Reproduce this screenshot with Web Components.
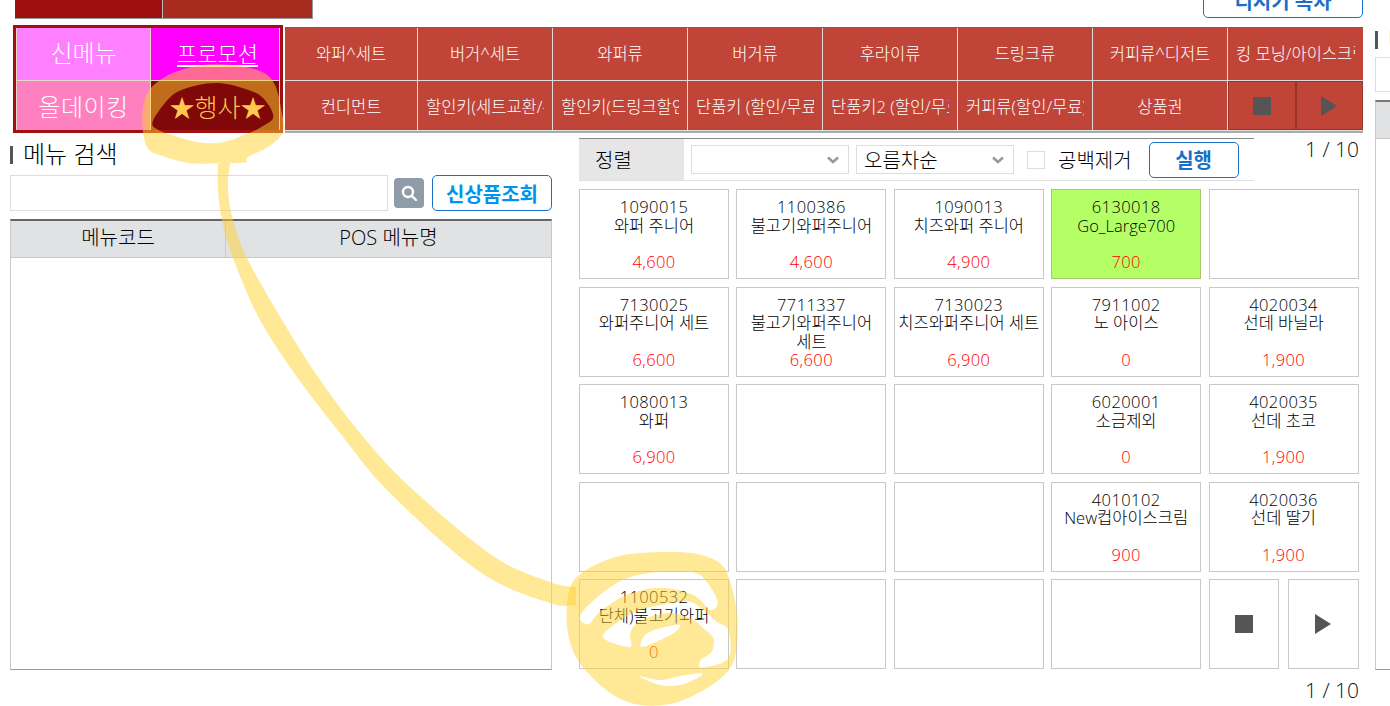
<!DOCTYPE html>
<html lang="ko">
<head>
<meta charset="utf-8">
<title>POS 메뉴</title>
<style>
  html, body { margin: 0; padding: 0; background: #fff; }
  body {
    width: 1390px; height: 706px; overflow: hidden; position: relative;
    font-family: "Open Sans", "Noto Sans CJK KR", sans-serif; font-weight: 300; color: #000;
  }
</style>
</head>
<body>
<pos-page></pos-page>
<marker-overlay></marker-overlay>

<script>
const stopIcon = (c = '#555') => `<svg width="18" height="18" viewBox="0 0 18 18"><rect width="18" height="18" fill="${c}"/></svg>`;
const playIcon = (c = '#555') => `<svg width="16" height="20" viewBox="0 0 16 20"><path d="M0 0L16 10L0 20Z" fill="${c}"/></svg>`;

class KeyCell extends HTMLElement {
  connectedCallback() {
    this.attachShadow({ mode: 'open' }).innerHTML = `
      <style>
        :host {
          display: flex; align-items: center; justify-content: center; min-width: 0;
          background: #c04538; color: #fff; font-size: 16.5px; overflow: hidden;
          box-sizing: border-box; padding: 0 8px;
        }
        span { display: block; white-space: nowrap; overflow: hidden; text-align: center; width: 100%; }
      </style>
      <span><slot></slot></span>`;
  }
}
customElements.define('key-cell', KeyCell);

class KeyGrid extends HTMLElement {
  connectedCallback() {
    const rows = [
      ['와퍼^세트', '버거^세트', '와퍼류', '버거류', '후라이류', '드링크류', '커피류^디저트', '킹 모닝/아이스크림'],
      ['컨디먼트', '할인키(세트교환/무료)', '할인키(드링크할인)', '단품키 (할인/무료)', '단품키2 (할인/무료)', '커피류(할인/무료)', '상품권'],
    ];
    const cells = rows.flat().map((t) => `<key-cell>${t}</key-cell>`).join('');
    this.attachShadow({ mode: 'open' }).innerHTML = `
      <style>
        :host {
          display: grid; box-sizing: border-box; width: 1078px; height: 106px; margin-top: 2px;
          grid-template-columns: 132px repeat(6, 134px) 135px; grid-template-rows: 52px 49px;
          column-gap: 1px; row-gap: 1px; background: #ddd;
          border-top: 1px solid #666; border-bottom: 2px solid #aaa;
        }
        key-cell:nth-of-type(-n+8) { padding-bottom: 3px; }
        .ctl { display: flex; background: #9c3226; gap: 2px; padding: 1px; box-sizing: border-box; }
        .ctl div { flex: 1; background: #c04538; display: flex; align-items: center; justify-content: center; }
      </style>
      ${cells}
      <div class="ctl"><div>${stopIcon()}</div><div>${playIcon()}</div></div>`;
  }
}
customElements.define('key-grid', KeyGrid);

class PromoGrid extends HTMLElement {
  connectedCallback() {
    this.attachShadow({ mode: 'open' }).innerHTML = `
      <style>
        :host {
          display: grid; box-sizing: border-box; width: 270px; height: 108px; flex: none;
          grid-template-columns: 133px 128px; grid-template-rows: 52px 49px; gap: 1px;
          border: 3px solid #a01010; background: #e6d8c8;
          padding: 0 1px;
        }
        div { display: flex; align-items: center; justify-content: center; color: #fff; box-sizing: border-box; }
        .a { background: #ff80ff; font-size: 24px; padding-bottom: 5px; }
        .b { background: #ff00ff; font-size: 22px; padding: 0 0 5px 5px; }
        .b span { text-decoration: underline; text-underline-offset: 3px; }
        .c { background: #ff80c0; font-size: 24px; letter-spacing: .5px; }
        .d { background: #800808; color: #ffc94d; font-size: 25px; padding-left: 5px; }
      </style>
      <div class="a">신메뉴</div>
      <div class="b"><span>프로모션</span></div>
      <div class="c">올데이킹</div>
      <div class="d">★행사★</div>`;
  }
}
customElements.define('promo-grid', PromoGrid);

class SectionTitle extends HTMLElement {
  connectedCallback() {
    this.attachShadow({ mode: 'open' }).innerHTML = `
      <style>
        :host { display: flex; align-items: center; gap: 10px; height: 18px; font-size: 24px; white-space: nowrap; color: #000; }
        i { width: 3px; height: 18px; background: #555; flex: none; }
        span { margin-bottom: 5px; }
      </style>
      <i></i><span><slot></slot></span>`;
  }
}
customElements.define('section-title', SectionTitle);

class BlueButton extends HTMLElement {
  connectedCallback() {
    this.attachShadow({ mode: 'open' }).innerHTML = `
      <style>
        :host {
          display: flex; align-items: center; justify-content: center; box-sizing: border-box; flex: none;
          height: 36px; border: 1px solid #1a6fc9; border-radius: 5px; background: #fff;
          color: var(--btn-color, #1a6fc9); font-size: 20px; font-weight: 700; white-space: nowrap;
        }
      </style>
      <slot></slot>`;
  }
}
customElements.define('blue-button', BlueButton);

class MenuTable extends HTMLElement {
  connectedCallback() {
    this.attachShadow({ mode: 'open' }).innerHTML = `
      <style>
        :host {
          display: block; box-sizing: border-box; height: 451px; border: 1px solid #c8c8c8;
          border-top: 2px solid #666; border-bottom-color: #999;
        }
        .head {
          display: grid; grid-template-columns: 214px 1fr; height: 36px; background: #e1e2e4;
          border-bottom: 1px solid #c8c8c8; font-size: 20px; color: #000;
        }
        .head div { display: flex; align-items: center; justify-content: center; padding-bottom: 5px; box-sizing: border-box; }
        .head div + div { border-left: 1px solid #c8c8c8; }
      </style>
      <div class="head"><div>메뉴코드</div><div>POS 메뉴명</div></div>`;
  }
}
customElements.define('menu-table', MenuTable);

class SearchPanel extends HTMLElement {
  connectedCallback() {
    this.attachShadow({ mode: 'open' }).innerHTML = `
      <style>
        :host { display: flex; flex-direction: column; width: 542px; flex: none; padding-top: 8px; }
        .row { display: flex; align-items: center; margin-top: 11px; height: 36px; margin-bottom: 8px; }
        .input { width: 378px; height: 36px; box-sizing: border-box; border: 1px solid #ddd; }
        .go {
          width: 30px; height: 30px; margin-left: 6px; background: #8f9ba6; border-radius: 4px;
          display: flex; align-items: center; justify-content: center;
        }
        blue-button { width: 120px; margin-left: 8px; --btn-color: #0095ea; }
      </style>
      <section-title>메뉴 검색</section-title>
      <div class="row">
        <div class="input"></div>
        <div class="go"><svg width="18" height="18" viewBox="0 0 18 18" fill="none" stroke="#fff" stroke-width="2.4"><circle cx="8" cy="8" r="5"/><path d="M11.8 11.8L16 16" stroke-linecap="round"/></svg></div>
        <blue-button>신상품조회</blue-button>
      </div>
      <menu-table></menu-table>`;
  }
}
customElements.define('search-panel', SearchPanel);

class SortSelect extends HTMLElement {
  connectedCallback() {
    this.attachShadow({ mode: 'open' }).innerHTML = `
      <style>
        :host {
          display: flex; align-items: center; justify-content: space-between; box-sizing: border-box;
          width: 158px; height: 29px; flex: none; border: 1px solid #ddd; padding: 0 9px 0 7px;
          font-size: 20px; color: #000; background: #fff;
        }
        svg { flex: none; }
      </style>
      <span><slot></slot></span>
      <svg width="12" height="8" viewBox="0 0 12 8" fill="none" stroke="#999" stroke-width="2.6"><path d="M1 1.5L6 6L11 1.5"/></svg>`;
  }
}
customElements.define('sort-select', SortSelect);

class SortBar extends HTMLElement {
  connectedCallback() {
    this.attachShadow({ mode: 'open' }).innerHTML = `
      <style>
        :host {
          display: flex; align-items: center; box-sizing: border-box; width: 675px; height: 43px; flex: none;
          border-top: 1px solid #888; border-bottom: 1px solid #e0e0e0; font-size: 20px; color: #000;
        }
        .label { width: 105px; align-self: stretch; background: #e6e6e6; display: flex; align-items: center; padding-left: 16px; box-sizing: border-box; }
        sort-select { margin-left: 7px; }
        .chk { width: 18px; height: 18px; box-sizing: border-box; border: 1px solid #ddd; margin-left: 13px; }
        .txt { margin-left: 13px; white-space: nowrap; }
        blue-button { width: 90px; margin-left: 17px; }
      </style>
      <div class="label">정렬</div>
      <sort-select></sort-select>
      <sort-select>오름차순</sort-select>
      <div class="chk"></div>
      <div class="txt">공백제거</div>
      <blue-button>실행</blue-button>`;
  }
}
customElements.define('sort-bar', SortBar);

class ProductCard extends HTMLElement {
  connectedCallback() {
    const code = this.getAttribute('code');
    const price = this.getAttribute('price');
    this.attachShadow({ mode: 'open' }).innerHTML = `
      <style>
        :host {
          display: flex; flex-direction: column; box-sizing: border-box; min-width: 0;
          border: 1px solid #c8c8c8; padding: 8px 2px 6.5px; font-size: 16.5px; line-height: 18.5px;
          text-align: center; background: var(--card-bg, #fff); color: #000; word-break: keep-all;
        }
        :host([green]) { --card-bg: #b5ff66; border-color: #a6c86a; }
        .code, .price { letter-spacing: .4px; }
        .price { margin-top: auto; color: #f00; }
      </style>
      ${code ? `<div class="code">${code}</div><div><slot></slot></div><div class="price">${price}</div>` : ''}`;
  }
}
customElements.define('product-card', ProductCard);

class ProductGrid extends HTMLElement {
  connectedCallback() {
    const items = [
      ['1090015', '와퍼 주니어', '4,600'], ['1100386', '불고기와퍼주니어', '4,600'], ['1090013', '치즈와퍼 주니어', '4,900'], ['6130018', 'Go_Large700', '700', true], [],
      ['7130025', '와퍼주니어 세트', '6,600'], ['7711337', '불고기와퍼주니어 세트', '6,600'], ['7130023', '치즈와퍼주니어 세트', '6,900'], ['7911002', '노 아이스', '0'], ['4020034', '선데 바닐라', '1,900'],
      ['1080013', '와퍼', '6,900'], [], [], ['6020001', '소금제외', '0'], ['4020035', '선데 초코', '1,900'],
      [], [], [], ['4010102', 'New컵아이스크림', '900'], ['4020036', '선데 딸기', '1,900'],
      ['1100532', '단체)불고기와퍼', '0'], [], [], [],
    ];
    const cards = items.map(([code, name, price, green]) => (code
      ? `<product-card code="${code}" price="${price}" ${green ? 'green' : ''}>${name}</product-card>`
      : '<product-card></product-card>')).join('');
    this.attachShadow({ mode: 'open' }).innerHTML = `
      <style>
        :host {
          display: grid; grid-template-columns: repeat(5, 150px); grid-template-rows: repeat(5, 90px);
          column-gap: 7.4px; row-gap: 7.5px; margin-top: 8px;
        }
        .nav { display: flex; gap: 9px; }
        .nav div {
          flex: 1; border: 1px solid #c8c8c8; box-sizing: border-box;
          display: flex; align-items: center; justify-content: center;
        }
      </style>
      ${cards}
      <div class="nav"><div>${stopIcon()}</div><div>${playIcon()}</div></div>`;
  }
}
customElements.define('product-grid', ProductGrid);

class PageCount extends HTMLElement {
  connectedCallback() {
    this.attachShadow({ mode: 'open' }).innerHTML = `
      <style>
        :host { display: block; font-size: 21px; line-height: 22px; text-align: right; color: #111; white-space: nowrap; }
      </style>
      <slot></slot>`;
  }
}
customElements.define('page-count', PageCount);

class ProductPanel extends HTMLElement {
  connectedCallback() {
    this.attachShadow({ mode: 'open' }).innerHTML = `
      <style>
        :host { display: block; width: 780px; flex: none; }
        .top { display: flex; }
        .top page-count { flex: 1; }
        .foot { margin-top: 10px; }
      </style>
      <div class="top"><sort-bar></sort-bar><page-count>1 / 10</page-count></div>
      <product-grid></product-grid>
      <page-count class="foot">1 / 10</page-count>`;
  }
}
customElements.define('product-panel', ProductPanel);

class SidePanel extends HTMLElement {
  connectedCallback() {
    this.attachShadow({ mode: 'open' }).innerHTML = `
      <style>
        :host { display: block; width: 400px; flex: none; padding-top: 31px; }
        .input { height: 35px; margin-top: 8px; box-sizing: border-box; border: 1px solid #ddd; }
        .table { height: 570px; margin-top: 8px; box-sizing: border-box; border-left: 1px solid #c8c8c8; border-top: 2px solid #777; border-bottom: 1px solid #999; }
        .table div { height: 36px; background: #e1e2e4; border-bottom: 1px solid #c8c8c8; }
      </style>
      <section-title>메뉴 검색</section-title>
      <div class="input"></div>
      <div class="table"><div></div></div>`;
  }
}
customElements.define('side-panel', SidePanel);

class TopStrip extends HTMLElement {
  connectedCallback() {
    this.attachShadow({ mode: 'open' }).innerHTML = `
      <style>
        :host { display: flex; align-items: flex-end; height: 19px; overflow: hidden; padding-left: 5px; width: 1348px; }
        .tab { height: 19px; box-sizing: border-box; border-bottom: 1px solid #999; flex: none; }
        .t1 { width: 148px; background: #9e1010; border-right: 1px solid #bbb; }
        .t2 { width: 150px; background: #a82b20; border-right: 1px solid #999; }
        blue-button { width: 160px; margin-left: auto; margin-bottom: 1px; }
      </style>
      <div class="tab t1"></div><div class="tab t2"></div>
      <blue-button>디지기 목차</blue-button>`;
  }
}
customElements.define('top-strip', TopStrip);

class PosPage extends HTMLElement {
  connectedCallback() {
    this.attachShadow({ mode: 'open' }).innerHTML = `
      <style>
        :host { display: flex; width: 1390px; height: 706px; overflow: hidden; }
        .main { width: 1375px; flex: none; box-sizing: border-box; padding-left: 10px; }
        .keys { display: flex; gap: 2px; margin: 6px 0 0 3px; }
        .body { display: flex; gap: 27px; margin-top: 5px; }
      </style>
      <div class="main">
        <top-strip></top-strip>
        <div class="keys"><promo-grid></promo-grid><key-grid></key-grid></div>
        <div class="body"><search-panel></search-panel><product-panel></product-panel></div>
      </div>
      <side-panel></side-panel>`;
  }
}
customElements.define('pos-page', PosPage);

// highlighter scribble that sits over the page
class MarkerOverlay extends HTMLElement {
  // closed curve through the points
  smooth(pts) {
    const n = pts.length;
    const at = (i) => pts[(i + n) % n];
    let d = `M${pts[0][0]} ${pts[0][1]}`;
    pts.forEach((p, i) => {
      const [p0, p2, p3] = [at(i - 1), at(i + 1), at(i + 2)];
      const c1 = [p[0] + (p2[0] - p0[0]) / 6, p[1] + (p2[1] - p0[1]) / 6];
      const c2 = [p2[0] - (p3[0] - p[0]) / 6, p2[1] - (p3[1] - p[1]) / 6];
      d += `C${c1[0].toFixed(1)} ${c1[1].toFixed(1)} ${c2[0].toFixed(1)} ${c2[1].toFixed(1)} ${p2[0]} ${p2[1]}`;
    });
    return `${d}Z`;
  }

  connectedCallback() {
    const a = ([x, y]) => [135 + x / 3, 55 + y / 3];
    const b = ([x, y]) => [560 + x / 3, 545 + y / 3];
    const tailRight = [[230, 165], [228, 190], [233, 220], [247, 258], [282, 320], [318, 377], [360, 433], [410, 487], [493, 556], [550, 582], [576, 587], [576, 587]];
    const tailLeft = [[576, 605], [576, 605], [550, 603], [480, 572], [390, 493], [340, 433], [297, 377], [260, 320], [233, 258], [222, 220], [218, 190], [218, 165]];
    const loop = [
      ...[[22, 180], [40, 110], [100, 60], [190, 32], [290, 30], [380, 50], [420, 90], [440, 170], [445, 230], [400, 275], [340, 305], [335, 322], [335, 322], [295, 325]].map(a),
      ...tailRight, ...tailLeft,
      ...[[250, 325], [170, 325], [90, 305], [35, 275]].map(a),
    ];
    const loopHole = [[52, 205], [70, 170], [120, 115], [190, 90], [260, 85], [340, 105], [385, 130], [415, 185], [380, 215], [340, 235], [265, 262], [190, 262], [110, 240], [65, 222]].map(a);
    const blob = [[20, 230], [30, 130], [70, 80], [170, 35], [280, 22], [400, 25], [480, 55], [510, 110], [530, 200], [530, 300], [510, 370], [440, 430], [340, 475], [240, 480], [160, 450], [90, 390], [40, 320]].map(b);
    const holes = [
      [[60, 212], [120, 150], [200, 100], [300, 80], [400, 82], [440, 110], [473, 170], [450, 195], [400, 150], [300, 128], [200, 150], [120, 200], [85, 238]],
      [[128, 272], [175, 230], [240, 195], [330, 175], [390, 170], [430, 195], [470, 230], [505, 255], [505, 340], [425, 368], [422, 345], [455, 320], [460, 280], [430, 250], [400, 225], [340, 205], [270, 215], [225, 240], [210, 270], [212, 305], [160, 295]],
      [[243, 305], [255, 270], [300, 250], [360, 240], [340, 265], [290, 290]],
      [[235, 393], [300, 405], [350, 395], [420, 385], [420, 395], [360, 420], [300, 420]],
    ].map((h) => h.map(b));
    const d1 = this.smooth(loop) + this.smooth(loopHole);
    const d2 = this.smooth(blob) + holes.map((h) => this.smooth(h)).join('');
    this.attachShadow({ mode: 'open' }).innerHTML = `
      <style>
        :host { position: absolute; left: 0; top: 0; width: 1390px; height: 706px; pointer-events: none; }
        svg { display: block; }
      </style>
      <svg width="1390" height="706" viewBox="0 0 1390 706" fill="rgb(255,210,45)" fill-opacity="0.5" fill-rule="evenodd">
        <path d="${d1}"/><path d="${d2}"/>
      </svg>`;
  }
}
customElements.define('marker-overlay', MarkerOverlay);
</script>
</body>
</html>
